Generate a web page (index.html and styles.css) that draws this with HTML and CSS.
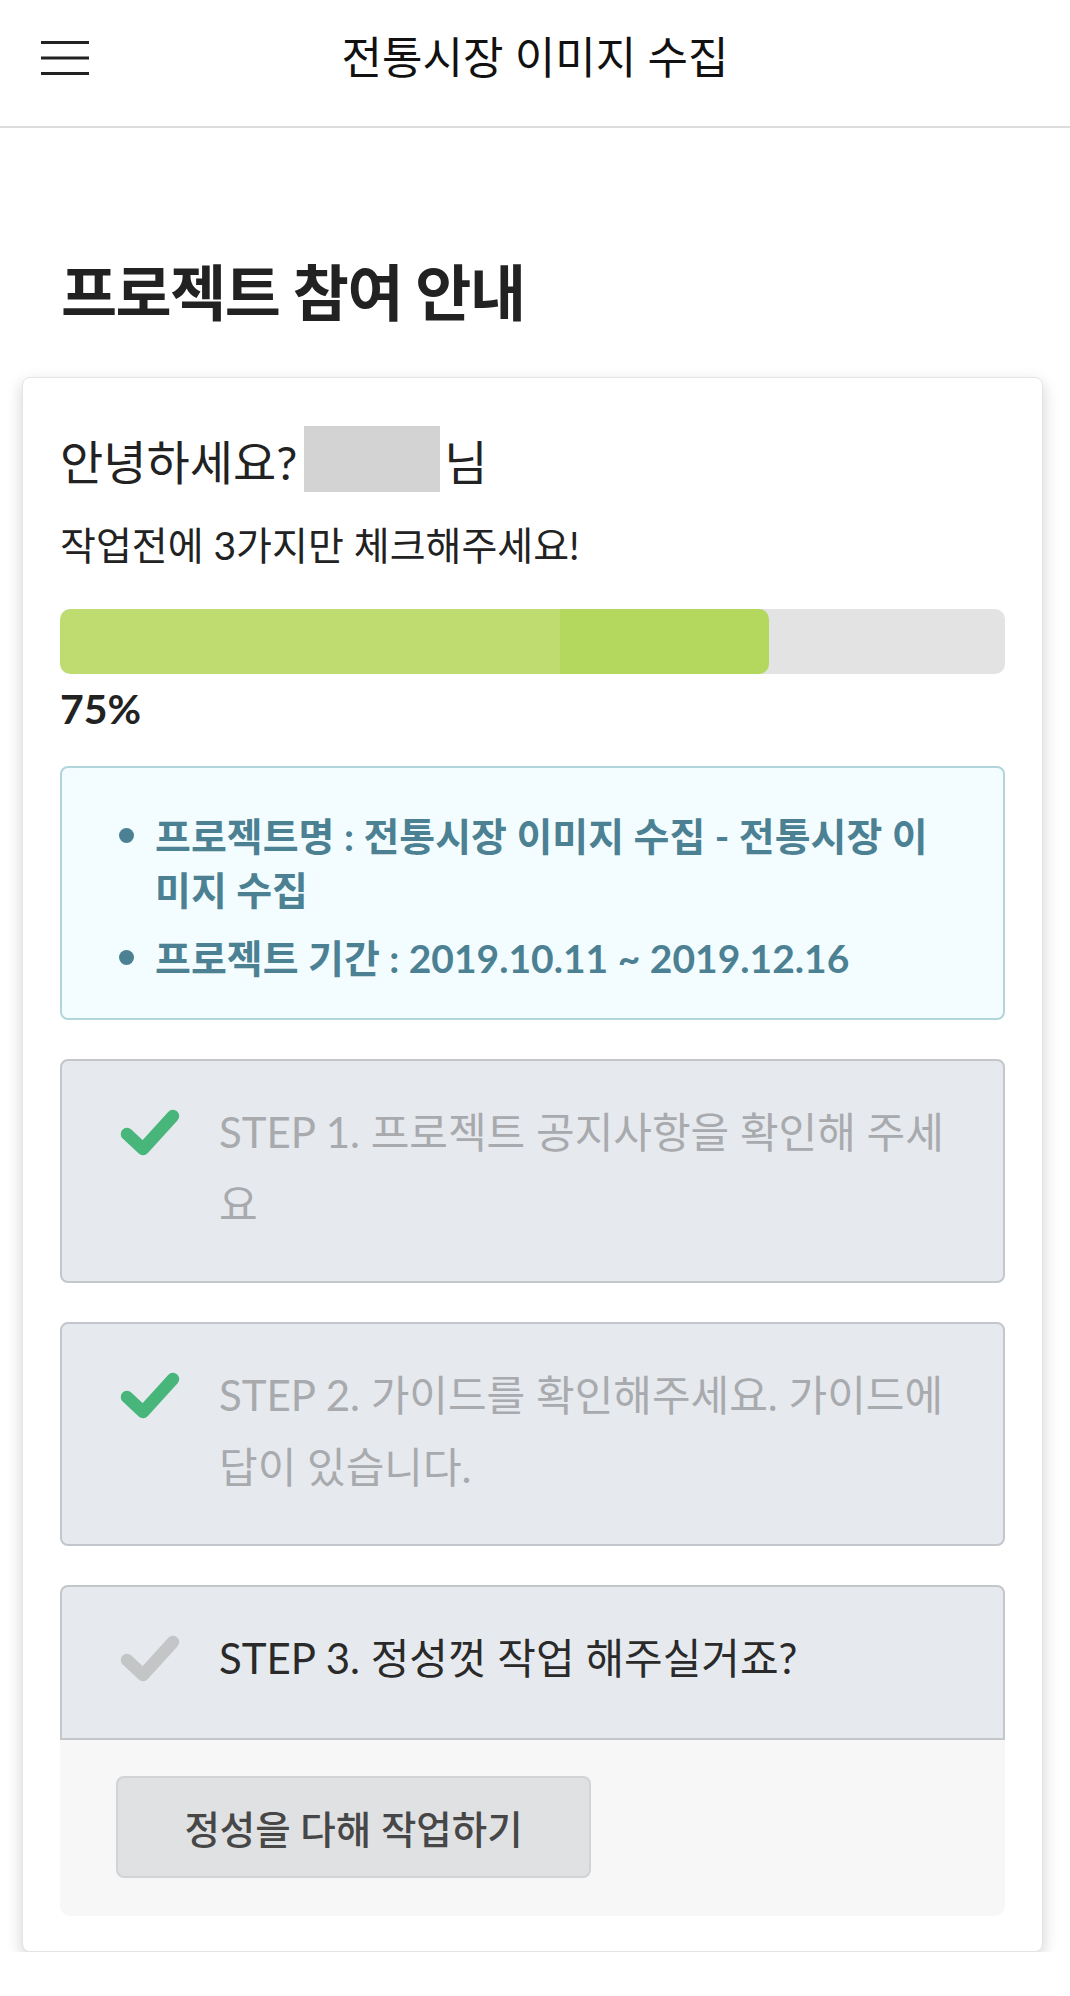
FILE: index.html
```html
<!DOCTYPE html>
<html lang="ko">
<head>
<meta charset="utf-8">
<title>전통시장 이미지 수집</title>
<link rel="stylesheet" href="styles.css">
</head>
<body>
<header class="topbar">
  <button class="menu-btn" aria-label="menu">
    <svg width="48" height="34" viewBox="0 0 48 34"><path d="M0 1.5H48M0 17H48M0 32.5H48" stroke="#222" stroke-width="3"/></svg>
  </button>
  <h1 class="topbar-title">전통시장 이미지 수집</h1>
  <span class="topbar-spacer"></span>
</header>
<main class="page">
  <h2 class="page-title">프로젝트 참여 안내</h2>
  <section class="card">
    <p class="greet"><span>안녕하세요?</span><span class="name-mask"></span><span>님</span></p>
    <p class="sub">작업전에 3가지만 체크해주세요!</p>
    <div class="progress"><div class="progress-fill" style="width:75%"></div></div>
    <p class="percent">75%</p>
    <div class="info">
      <ul class="info-list">
        <li>프로젝트명 : 전통시장 이미지 수집 - 전통시장 이미지 수집</li>
        <li>프로젝트 기간 : 2019.10.11 ~ 2019.12.16</li>
      </ul>
    </div>
    <div class="step done">
      <div class="step-icon"><svg width="60" height="48" viewBox="0 0 60 48"><path d="M7 26L23 41L53 8" fill="none" stroke="currentColor" stroke-width="12.5" stroke-linecap="round" stroke-linejoin="round"/></svg></div>
      <p class="step-text">STEP 1. 프로젝트 공지사항을 확인해 주세요</p>
    </div>
    <div class="step done">
      <div class="step-icon"><svg width="60" height="48" viewBox="0 0 60 48"><path d="M7 26L23 41L53 8" fill="none" stroke="currentColor" stroke-width="12.5" stroke-linecap="round" stroke-linejoin="round"/></svg></div>
      <p class="step-text">STEP 2. 가이드를 확인해주세요. 가이드에 답이 있습니다.</p>
    </div>
    <div class="step-group">
      <div class="step current">
        <div class="step-icon"><svg width="60" height="48" viewBox="0 0 60 48"><path d="M7 26L23 41L53 8" fill="none" stroke="currentColor" stroke-width="12.5" stroke-linecap="round" stroke-linejoin="round"/></svg></div>
        <p class="step-text">STEP 3. 정성껏 작업 해주실거죠?</p>
      </div>
      <div class="step-body">
        <button class="work-btn">정성을 다해 작업하기</button>
      </div>
    </div>
  </section>
</main>
</body>
</html>
```
FILE: styles.css
```css
* { box-sizing: border-box; }
html, body { margin: 0; padding: 0; background: #fff; }
body {
  font-family: Lato, "Noto Sans CJK KR", "Noto Sans", sans-serif;
  color: #222;
}
p { margin: 0; }

.topbar {
  height: 128px;
  border-bottom: 2px solid #dcdcdc;
  display: grid;
  grid-template-columns: 1fr auto 1fr;
  align-items: center;
}
.menu-btn {
  justify-self: start;
  margin-left: 41px;
  padding: 0;
  border: 0;
  background: none;
  display: flex;
  margin-top: -10px;
}
.topbar-title {
  margin: 0;
  font-size: 44px;
  font-weight: 400;
  color: #111;
  line-height: 1;
  margin-top: -12px;
}

.page { padding: 0 27px 0 22px; }
.page-title {
  margin: 131px 0 51px 39px;
  font-size: 61px;
  font-weight: 700;
  line-height: 67px;
  letter-spacing: -1.5px;
  color: #222;
}

.card {
  border: 1px solid #e4e4e4;
  border-radius: 8px;
  box-shadow: 0 6px 16px rgba(0,0,0,0.18);
  padding: 48px 37px 35px 37px;
  background: #fff;
}

.greet {
  display: flex;
  align-items: center;
  height: 66px;
  font-size: 47px;
  color: #222;
}
.name-mask {
  width: 136px;
  height: 66px;
  background: #d3d3d3;
  margin: 0 4px 0 7px;
}
.sub {
  margin-top: 28px;
  font-size: 39px;
  line-height: 50px;
  color: #222;
}

.progress {
  margin-top: 39px;
  height: 65px;
  background: #e3e3e3;
  border-radius: 10px;
  overflow: hidden;
}
.progress-fill {
  height: 100%;
  border-radius: 10px;
  background:
    linear-gradient(90deg, #bedc6f 0, #bedc6f 70.5%, #b4d85e 70.5%, #b4d85e 100%);
}
.percent {
  margin-top: 12px;
  font-size: 41px;
  font-weight: 700;
  line-height: 46px;
  color: #222;
}

.info {
  margin-top: 34px;
  border: 2px solid #b1d5da;
  border-radius: 8px;
  background: #f3fdff;
  padding: 41px 58px 33px 0;
}
.info-list {
  list-style: none;
  margin: 0;
  padding: 0;
}
.info-list li {
  display: flex;
  align-items: flex-start;
  font-size: 39px;
  font-weight: 700;
  line-height: 54px;
  color: #4b8192;
}
.info-list li::before {
  content: "";
  flex: 0 0 15px;
  height: 15px;
  border-radius: 50%;
  background: #4b8192;
  margin: 19px 21px 0 57px;
}
.info-list li + li { margin-top: 14px; }

.step {
  margin-top: 39px;
  display: flex;
  align-items: flex-start;
  border: 2px solid #c3c6ca;
  border-radius: 8px;
  background: #e6e9ed;
  padding: 35px 41px 41px 58px;
}
.step-icon {
  flex: 0 0 60px;
  height: 72px;
  display: flex;
  align-items: center;
  margin-right: 39px;
}
.step-text {
  font-size: 42px;
  line-height: 72px;
}
.step.done .step-icon { color: #48b67a; }
.step.done .step-text { color: #a8aaad; }
.step.current .step-icon { color: #c4c5c7; }
.step.current .step-text { color: #2a2a2a; }

.step-group { margin-top: 39px; }
.step-group .step {
  margin-top: 0;
  border-radius: 8px 8px 0 0;
  padding-bottom: 44px;
}
.step-body {
  background: #f7f7f7;
  border-radius: 0 0 10px 10px;
  padding: 36px 56px 38px;
}
.work-btn {
  width: 475px;
  height: 102px;
  border: 2px solid #d2d3d5;
  border-radius: 8px;
  background: #e0e1e3;
  font-family: Lato, "Noto Sans CJK KR", sans-serif;
  font-size: 38.5px;
  font-weight: 500;
  color: #474747;
  padding: 0;
}
```
